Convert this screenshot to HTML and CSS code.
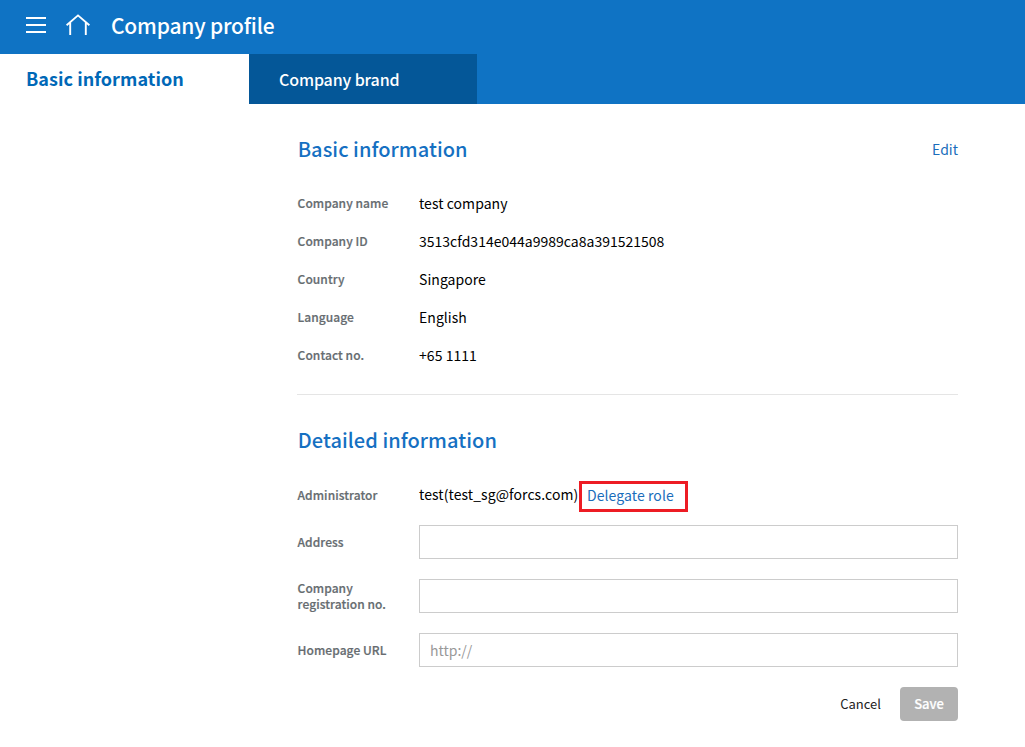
FILE: index.html
```html
<!DOCTYPE html>
<html lang="en">
<head>
<meta charset="utf-8">
<title>Company profile</title>
<link rel="stylesheet" href="styles.css">
</head>
<body>
<header class="topbar">
  <svg class="menu-icon" width="20" height="16" viewBox="0 0 20 16"><path d="M0 1h20M0 8h20M0 15h20" stroke="#fff" stroke-width="2"/></svg>
  <svg class="home-icon" width="24" height="22" viewBox="0 0 24 22" fill="none" stroke="#fff" stroke-width="1.9"><path d="M.6 11.2 12 1.4l11.4 9.8M4.2 8.5V21M19.8 8.5V21"/></svg>
  <h1 class="page-title">Company profile</h1>
</header>
<nav class="tabs">
  <a class="tab tab-active">Basic information</a>
  <a class="tab tab-brand">Company brand</a>
</nav>
<main class="content">
  <section class="basic">
    <div class="section-head"><h2 class="section-title">Basic information</h2><a class="link edit">Edit</a></div>
    <dl class="facts">
      <dt class="label">Company name</dt><dd class="value">test company</dd>
      <dt class="label">Company ID</dt><dd class="value company-id">3513cfd314e044a9989ca8a391521508</dd>
      <dt class="label">Country</dt><dd class="value">Singapore</dd>
      <dt class="label">Language</dt><dd class="value">English</dd>
      <dt class="label">Contact no.</dt><dd class="value">+65 1111</dd>
    </dl>
  </section>
  <section class="detail">
    <h2 class="section-title">Detailed information</h2>
    <div class="row admin"><span class="label">Administrator</span><span class="value admin-name">test(test_sg@forcs.com)</span><a class="link delegate">Delegate role</a></div>
    <div class="row"><label class="label" for="address">Address</label><input class="field" id="address"></div>
    <div class="row"><label class="label" for="regno">Company<br>registration no.</label><input class="field" id="regno"></div>
    <div class="row"><label class="label" for="url">Homepage URL</label><input class="field" id="url" placeholder="http://"></div>
    <div class="actions"><button class="btn cancel">Cancel</button><button class="btn save">Save</button></div>
  </section>
</main>
</body>
</html>
```
FILE: styles.css
```css
* { box-sizing: border-box; margin: 0; padding: 0; }
body { background: #fff; color: #000; font-family: "Noto Sans CJK KR", "Noto Sans", sans-serif; font-size: 14px; overflow: hidden; }
.topbar { display: flex; height: 54px; padding-left: 26px; background: #0f73c4; }
.menu-icon { margin-top: 17px; }
.home-icon { margin: 14px 0 0 20px; }
.page-title { margin-left: 21px; color: #fff; font-size: 21px; font-weight: 500; letter-spacing: -.2px; line-height: 50px; }
.tabs { display: flex; height: 50px; background: #0f73c4; }
.tab { line-height: 48px; }
.tab-active { width: 249px; padding-left: 26px; background: #fff; color: #0068b7; font-size: 18px; font-weight: 700; letter-spacing: .05px; }
.tab-brand { width: 228px; padding-left: 30px; background: #045798; color: #fff; font-size: 16px; font-weight: 500; letter-spacing: -.12px; line-height: 51px; }
.content { width: 661px; margin-left: 297px; }
.section-head { display: flex; justify-content: space-between; height: 80px; padding-top: 30px; }
.section-title { color: #1570c2; font-size: 20px; font-weight: 500; letter-spacing: .06px; line-height: 30px; padding-left: .7px; }
.link { color: #1a6dbb; font-size: 14px; }
.edit { line-height: 30px; }
.facts { display: grid; grid-template-columns: 122px 1fr; grid-auto-rows: 38px; height: 211px; border-bottom: 1px solid #e5e5e5; }
.facts .label, .facts .value { line-height: 38px; }
.label { padding-left: .6px; color: #666c70; font-size: 12px; font-weight: 500; letter-spacing: .06px; line-height: 16px; -webkit-text-stroke: .2px #666c70; }
.value { font-size: 14px; letter-spacing: .05px; }
.company-id { letter-spacing: .01px; }
.detail { padding-top: 30px; }
.row { display: grid; grid-template-columns: 122px 1fr; align-items: center; height: 34px; margin-bottom: 20px; }
.admin { grid-template-columns: 122px 160px 109px; height: 31px; margin: 26px 0 13px; }
.admin .label { padding-bottom: 4px; }
.admin-name { line-height: 27px; padding-bottom: 4px; letter-spacing: .08px; }
.delegate { height: 31px; padding-left: 5px; border: 3px solid #ed1c24; letter-spacing: .08px; line-height: 23px; }
.field { width: 100%; height: 34px; padding: 0 10px; border: 1px solid #ccc; background: #fff; font: 14px "Noto Sans CJK KR", sans-serif; }
.field::placeholder { color: #999; }
.actions { display: flex; justify-content: flex-end; gap: 19px; }
.btn { height: 34px; border: 0; background: none; font: 13px/34px "Noto Sans CJK KR", sans-serif; }
.cancel { color: #222; }
.save { width: 58px; border-radius: 4px; background: #b2b2b2; color: #fff; font-weight: 500; -webkit-text-stroke: .2px #fff; }
```
